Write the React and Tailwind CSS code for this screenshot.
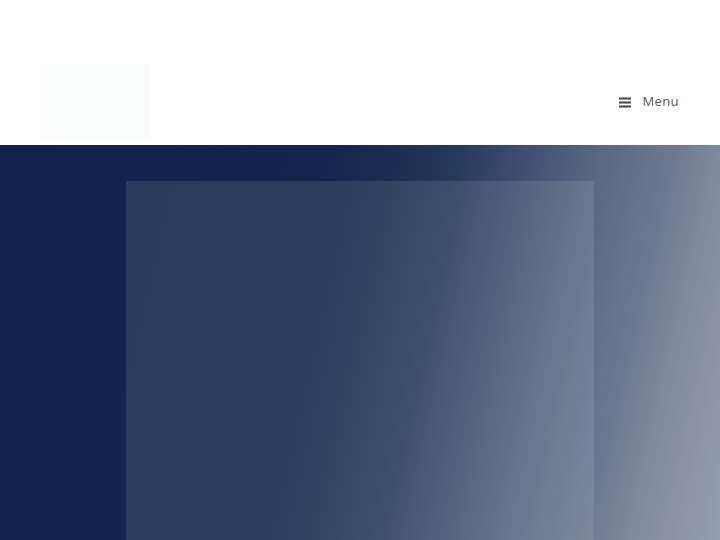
import React from "react";

export default function App() {
  return (
    <div className="w-[720px] h-[540px] overflow-hidden bg-white" style={{ fontFamily: '"Open Sans", "Liberation Sans", sans-serif' }}>
      <header className="h-[145px] flex items-end justify-between pl-[40px] pr-[41px] pb-[5px]">
        <div className="w-[110px] h-[76px] bg-[#fbfcfc]" />
        <button className="flex items-center gap-[11px] h-[76px] text-[#555] text-[13px] tracking-[0.4px]">
          <svg width="12" height="11" viewBox="0 0 12 11" className="fill-[#444]">
            <rect x="0" y="0.5" width="12" height="2" />
            <rect x="0" y="4.5" width="12" height="2" />
            <rect x="0" y="8.5" width="12" height="2" />
          </svg>
          <span>Menu</span>
        </button>
      </header>
      <section
        className="h-[395px] pt-[36px] pl-[126px] pr-[126px] bg-[linear-gradient(103deg,#10224a_0%,#13254b_40%,#1a2c4f_48%,#263a5a_57%,#3d4b6e_64%,#586882_74%,#6c7890_83%,#808a9c_89%,#8a8ea4_92%,#979eb1_100%)]"
      >
        <div className="h-full w-[468px] bg-white/10" />
      </section>
    </div>
  );
}
